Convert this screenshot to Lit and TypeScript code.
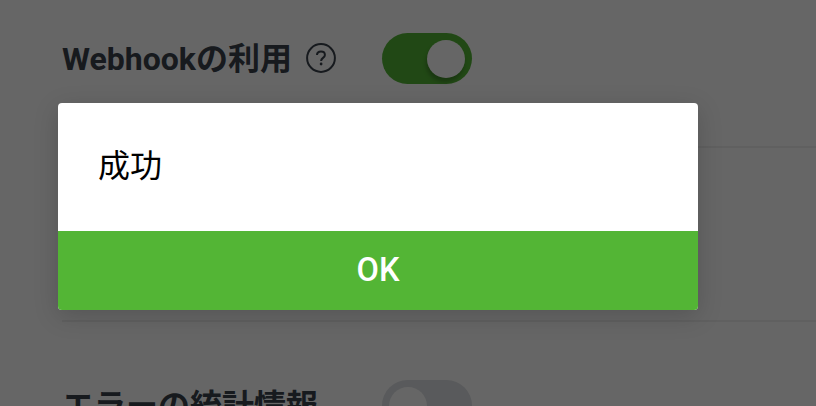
import { LitElement, css, html, svg, nothing } from 'lit';
import { customElement, property, state } from 'lit/decorators.js';

/**
 * On/off switch.
 *
 * @element settings-switch
 * @fires switch-change - `detail.checked`
 */
@customElement('settings-switch')
export class SettingsSwitch extends LitElement {
  @property({ type: Boolean, reflect: true }) checked = false;
  @property() label = '';

  static styles = css`
    :host {
      display: block;
    }
    .track {
      display: flex;
      box-sizing: border-box;
      width: 90px;
      height: 51px;
      padding: 7px;
      border: 0;
      border-radius: 26px;
      background: #dee1e5;
      cursor: pointer;
    }
    .knob {
      width: 38px;
      height: 38px;
      border-radius: 50%;
      background: #fff;
    }
    :host([checked]) .track {
      justify-content: flex-end;
      background: #53b535;
    }
    :host([checked]) .knob {
      box-shadow: -1px 4px 4px rgba(0, 0, 0, 0.25);
    }
  `;

  private _toggle() {
    this.checked = !this.checked;
    this.dispatchEvent(
      new CustomEvent('switch-change', { detail: { checked: this.checked }, bubbles: true, composed: true })
    );
  }

  render() {
    return html`
      <button
        class="track"
        role="switch"
        aria-label=${this.label}
        aria-checked=${this.checked ? 'true' : 'false'}
        @click=${this._toggle}
      >
        <span class="knob"></span>
      </button>
    `;
  }
}

/**
 * Message box with a single confirm button.
 *
 * @element message-dialog
 * @fires dialog-close - on OK.
 */
@customElement('message-dialog')
export class MessageDialog extends LitElement {
  @property() message = '';

  static styles = css`
    :host {
      display: block;
      width: 640px;
    }
    .box {
      overflow: hidden;
      border-radius: 4px;
      background: #fff;
      box-shadow: 0 6px 24px rgba(0, 0, 0, 0.17);
    }
    .message {
      margin: 0;
      padding: 39px 40px 41px;
      font-size: 32px;
      line-height: 48px;
      color: #000;
    }
    .ok {
      display: block;
      width: 100%;
      height: 78.5px;
      padding: 0 0 1px;
      border: 0;
      background: #53b535;
      color: #fff;
      font: 500 32.5px/76px Roboto, sans-serif;
      cursor: pointer;
    }
  `;

  private _close() {
    this.dispatchEvent(new CustomEvent('dialog-close', { bubbles: true, composed: true }));
  }

  render() {
    return html`
      <div class="box" role="alertdialog" aria-modal="true">
        <p class="message">${this.message}</p>
        <button class="ok" @click=${this._close}>OK</button>
      </div>
    `;
  }
}

const helpIcon = svg`
  <circle cx="15" cy="15" r="13.9" />
  <path d="M11 12.1C11 9.9 12.7 8.5 15 8.5s3.9 1.4 3.9 3.4c0 3-3.8 3-3.8 6" />
  <circle class="dot" cx="15.1" cy="21" r="1.4" />
`;

@customElement('app-root')
export class AppRoot extends LitElement {
  @state() private _open = true;

  static styles = css`
    :host {
      display: block;
      position: relative;
      height: 406px;
      overflow: hidden;
      background: #fff;
      color: #3a424c;
      font-family: Roboto, 'Noto Sans CJK JP', sans-serif;
    }
    .settings {
      display: flex;
      flex-direction: column;
      padding-left: 62px;
    }
    .row {
      display: flex;
      align-items: flex-start;
      box-sizing: border-box;
      height: 174px;
      padding-top: 58px;
      border-bottom: 2px solid #efefef;
    }
    .row.first {
      height: 148px;
      padding-top: 33px;
    }
    .name {
      display: flex;
      align-items: center;
      gap: 14px;
      width: 320px;
      height: 49px;
      font-size: 32px;
      font-weight: 700;
      white-space: nowrap;
    }
    .label {
      padding-bottom: 3px;
    }
    .help {
      width: 30px;
      height: 30px;
      fill: none;
      stroke: currentColor;
      stroke-width: 2;
    }
    .help .dot {
      fill: currentColor;
      stroke: none;
    }
    .overlay {
      position: absolute;
      inset: 0;
      padding: 103px 0 0 58px;
      background: rgba(0, 0, 0, 0.6);
    }
  `;

  render() {
    return html`
      <main class="settings">
        <section class="row first">
          <div class="name">
            <span class="label">Webhookの利用</span>
            <svg class="help" viewBox="0 0 30 30">${helpIcon}</svg>
          </div>
          <settings-switch label="Webhookの利用" checked></settings-switch>
        </section>
        <section class="row"></section>
        <section class="row">
          <div class="name"><span class="label">エラーの統計情報</span></div>
          <settings-switch label="エラーの統計情報"></settings-switch>
        </section>
      </main>
      ${this._open
        ? html`
            <div class="overlay">
              <message-dialog message="成功" @dialog-close=${() => (this._open = false)}></message-dialog>
            </div>
          `
        : nothing}
    `;
  }
}

declare global {
  interface HTMLElementTagNameMap {
    'settings-switch': SettingsSwitch;
    'message-dialog': MessageDialog;
    'app-root': AppRoot;
  }
}
